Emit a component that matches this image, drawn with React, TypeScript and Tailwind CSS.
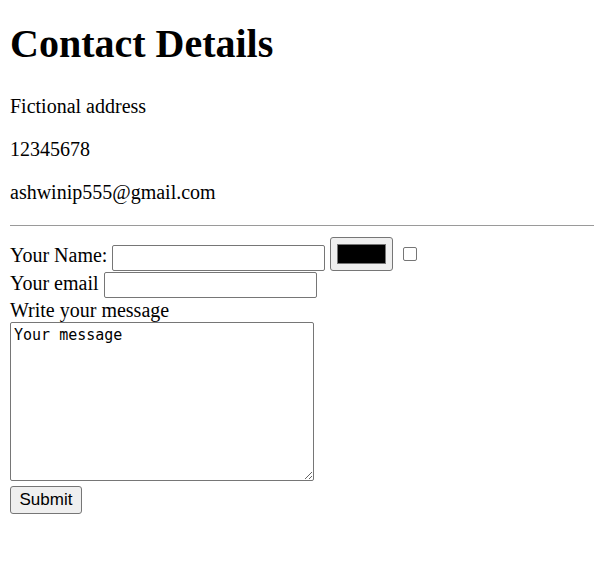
export default function App() {
  return (
    <div className="min-h-[586px] bg-white pl-[10px] font-['Liberation_Serif',serif] text-black">
      {/* Contact info */}
      <h1 className="pt-[21px] text-[40px] font-bold leading-[46px]">Contact Details</h1>
      <div className="mt-[28px] flex flex-col gap-[20px] text-[20px] leading-[23px]">
        <p>Fictional address</p>
        <p>12345678</p>
        <p>ashwinip555@gmail.com</p>
      </div>
      <hr className="mt-[21px] border-0 border-t border-[#9a9a9a]" />

      {/* Form */}
      <form className="mt-[10px] flex flex-col items-start text-[20px] leading-[23px]" onSubmit={(e) => e.preventDefault()}>
        <div className="flex h-[35px] items-end">
          <label className="mb-[4px] mr-[5px]">Your Name:</label>
          <input
            type="text"
            className="h-[26px] w-[213px] rounded-[2px] border border-[#767676] bg-white px-[3px] text-[16px] outline-none"
          />
          <div className="ml-[5px] flex h-[34px] w-[63px] items-center justify-center rounded-[3px] border border-[#767676] bg-[#efefef]">
            <div className="h-[20px] w-[49px] border border-[#777] bg-black" />
          </div>
          <input
            type="checkbox"
            className="mb-[10px] ml-[10px] h-[14px] w-[14px] appearance-none rounded-[2px] border border-[#767676] bg-white"
          />
        </div>
        <div className="mt-[1px] flex items-end">
          <label className="mb-[3px] mr-[5px]">Your email</label>
          <input
            type="email"
            className="h-[26px] w-[213px] rounded-[2px] border border-[#767676] bg-white px-[3px] text-[16px] outline-none"
          />
        </div>
        <label className="mt-[1px]">Write your message</label>
        <textarea
          defaultValue="Your message"
          className="h-[159px] w-[304px] rounded-[2px] border border-[#767676] px-[3px] py-[3px] font-['DejaVu_Sans_Mono',monospace] text-[15px] leading-[18px] outline-none"
        />
        <button
          type="submit"
          className="mt-[5px] h-[28px] w-[72px] rounded-[3px] border border-[#767676] bg-[#efefef] font-['Liberation_Sans',sans-serif] text-[17px] leading-[20px]"
        >
          Submit
        </button>
      </form>
    </div>
  );
}
